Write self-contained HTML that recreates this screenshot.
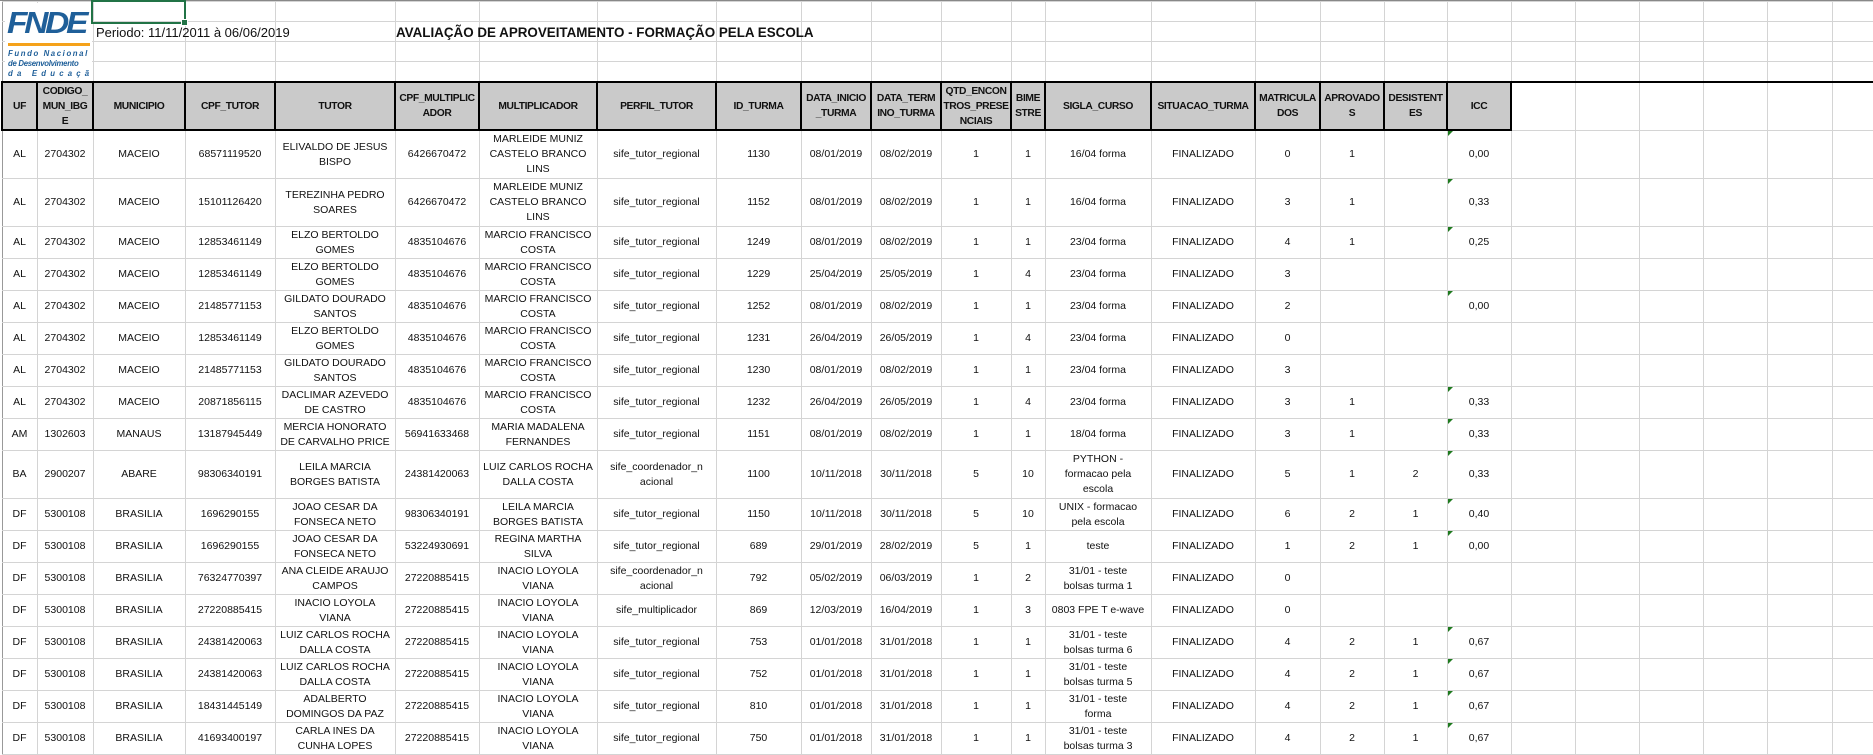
<!DOCTYPE html>
<html><head><meta charset="utf-8">
<style>
html,body{margin:0;padding:0;background:#fff;}
body{width:1873px;height:754px;overflow:hidden;position:relative;font-family:"Liberation Sans",sans-serif;color:#111;}
table{position:absolute;left:1px;top:1px;border-collapse:collapse;table-layout:fixed;width:1894px;}
td{border:1px solid #d4d4d4;padding:0;text-align:center;vertical-align:middle;font-size:10.5px;line-height:15px;white-space:nowrap;overflow:hidden;position:relative;}
tr.t td{height:19px;}
tr.h td{height:46px;background:#cacaca;border:2px solid #000;font-weight:bold;letter-spacing:-0.4px;font-size:10.3px;}
tr.h td.e{background:#fff;border:1px solid #d4d4d4;border-top:2px solid #000;}
tr.r3 td{height:47px;}
tr.r2 td{height:31px;}
td.L{border-left:1px solid #999;}
td.g::before{content:"";position:absolute;left:0;top:0;border-top:5px solid #1e7a1e;border-right:5px solid transparent;}
#topline{position:absolute;left:0;top:0;width:1873px;height:1px;background:#888;}
#logo{position:absolute;left:5px;top:3px;width:87px;height:78px;background:#fff;overflow:hidden;}
#fnde{position:absolute;left:2px;top:5px;font:italic bold 31px/30px "Liberation Sans",sans-serif;color:#1f5f99;letter-spacing:-3px;transform:scaleX(1.08);transform-origin:left;}
#bar{position:absolute;left:3px;top:40px;width:82px;height:3px;background:#f5a21a;}
.lt{position:absolute;left:3px;font:italic bold 7.8px/9px "Liberation Sans",sans-serif;color:#1f5f99;white-space:nowrap;}
#per{position:absolute;left:96px;top:25px;font-size:13px;line-height:16px;color:#111;}
#tit{position:absolute;left:396px;top:25px;font-size:13.4px;font-weight:bold;line-height:16px;color:#111;}
#sel{position:absolute;left:91px;top:0px;width:91px;height:20px;border:2px solid #217346;}
#sel::after{content:"";position:absolute;right:-4px;bottom:-4px;width:5px;height:5px;background:#217346;border:1px solid #fff;}
</style></head><body>
<table>
<colgroup>
<col style="width:35px"><col style="width:56px"><col style="width:92px"><col style="width:90px"><col style="width:120px"><col style="width:84px"><col style="width:118px"><col style="width:119px"><col style="width:85px"><col style="width:70px"><col style="width:70px"><col style="width:70px"><col style="width:34px"><col style="width:106px"><col style="width:104px"><col style="width:65px"><col style="width:64px"><col style="width:63px"><col style="width:64px"><col style="width:64px"><col style="width:64px"><col style="width:64px"><col style="width:64px"><col style="width:65px"><col style="width:64px">
</colgroup>
<tr class="t"><td class="L"></td><td></td><td></td><td></td><td></td><td></td><td></td><td></td><td></td><td></td><td></td><td></td><td></td><td></td><td></td><td></td><td></td><td></td><td></td><td></td><td></td><td></td><td></td><td></td><td></td></tr>
<tr class="t"><td class="L"></td><td></td><td></td><td></td><td></td><td></td><td></td><td></td><td></td><td></td><td></td><td></td><td></td><td></td><td></td><td></td><td></td><td></td><td></td><td></td><td></td><td></td><td></td><td></td><td></td></tr>
<tr class="t"><td class="L"></td><td></td><td></td><td></td><td></td><td></td><td></td><td></td><td></td><td></td><td></td><td></td><td></td><td></td><td></td><td></td><td></td><td></td><td></td><td></td><td></td><td></td><td></td><td></td><td></td></tr>
<tr class="t"><td class="L"></td><td></td><td></td><td></td><td></td><td></td><td></td><td></td><td></td><td></td><td></td><td></td><td></td><td></td><td></td><td></td><td></td><td></td><td></td><td></td><td></td><td></td><td></td><td></td><td></td></tr>
<tr class="h"><td>UF</td><td>CODIGO_<br>MUN_IBG<br>E</td><td>MUNICIPIO</td><td>CPF_TUTOR</td><td>TUTOR</td><td>CPF_MULTIPLIC<br>ADOR</td><td>MULTIPLICADOR</td><td>PERFIL_TUTOR</td><td>ID_TURMA</td><td>DATA_INICIO<br>_TURMA</td><td>DATA_TERM<br>INO_TURMA</td><td>QTD_ENCON<br>TROS_PRESE<br>NCIAIS</td><td>BIME<br>STRE</td><td>SIGLA_CURSO</td><td>SITUACAO_TURMA</td><td>MATRICULA<br>DOS</td><td>APROVADO<br>S</td><td>DESISTENT<br>ES</td><td>ICC</td><td class="e"></td><td class="e"></td><td class="e"></td><td class="e"></td><td class="e"></td><td class="e"></td></tr>
<tr class="r3"><td class="L">AL</td><td>2704302</td><td>MACEIO</td><td>68571119520</td><td>ELIVALDO DE JESUS<br>BISPO</td><td>6426670472</td><td>MARLEIDE MUNIZ<br>CASTELO BRANCO<br>LINS</td><td>sife_tutor_regional</td><td>1130</td><td>08/01/2019</td><td>08/02/2019</td><td>1</td><td>1</td><td>16/04 forma</td><td>FINALIZADO</td><td>0</td><td>1</td><td></td><td class="g">0,00</td><td></td><td></td><td></td><td></td><td></td><td></td></tr>
<tr class="r3"><td class="L">AL</td><td>2704302</td><td>MACEIO</td><td>15101126420</td><td>TEREZINHA PEDRO<br>SOARES</td><td>6426670472</td><td>MARLEIDE MUNIZ<br>CASTELO BRANCO<br>LINS</td><td>sife_tutor_regional</td><td>1152</td><td>08/01/2019</td><td>08/02/2019</td><td>1</td><td>1</td><td>16/04 forma</td><td>FINALIZADO</td><td>3</td><td>1</td><td></td><td class="g">0,33</td><td></td><td></td><td></td><td></td><td></td><td></td></tr>
<tr class="r2"><td class="L">AL</td><td>2704302</td><td>MACEIO</td><td>12853461149</td><td>ELZO BERTOLDO<br>GOMES</td><td>4835104676</td><td>MARCIO FRANCISCO<br>COSTA</td><td>sife_tutor_regional</td><td>1249</td><td>08/01/2019</td><td>08/02/2019</td><td>1</td><td>1</td><td>23/04 forma</td><td>FINALIZADO</td><td>4</td><td>1</td><td></td><td class="g">0,25</td><td></td><td></td><td></td><td></td><td></td><td></td></tr>
<tr class="r2"><td class="L">AL</td><td>2704302</td><td>MACEIO</td><td>12853461149</td><td>ELZO BERTOLDO<br>GOMES</td><td>4835104676</td><td>MARCIO FRANCISCO<br>COSTA</td><td>sife_tutor_regional</td><td>1229</td><td>25/04/2019</td><td>25/05/2019</td><td>1</td><td>4</td><td>23/04 forma</td><td>FINALIZADO</td><td>3</td><td></td><td></td><td></td><td></td><td></td><td></td><td></td><td></td><td></td></tr>
<tr class="r2"><td class="L">AL</td><td>2704302</td><td>MACEIO</td><td>21485771153</td><td>GILDATO DOURADO<br>SANTOS</td><td>4835104676</td><td>MARCIO FRANCISCO<br>COSTA</td><td>sife_tutor_regional</td><td>1252</td><td>08/01/2019</td><td>08/02/2019</td><td>1</td><td>1</td><td>23/04 forma</td><td>FINALIZADO</td><td>2</td><td></td><td></td><td class="g">0,00</td><td></td><td></td><td></td><td></td><td></td><td></td></tr>
<tr class="r2"><td class="L">AL</td><td>2704302</td><td>MACEIO</td><td>12853461149</td><td>ELZO BERTOLDO<br>GOMES</td><td>4835104676</td><td>MARCIO FRANCISCO<br>COSTA</td><td>sife_tutor_regional</td><td>1231</td><td>26/04/2019</td><td>26/05/2019</td><td>1</td><td>4</td><td>23/04 forma</td><td>FINALIZADO</td><td>0</td><td></td><td></td><td></td><td></td><td></td><td></td><td></td><td></td><td></td></tr>
<tr class="r2"><td class="L">AL</td><td>2704302</td><td>MACEIO</td><td>21485771153</td><td>GILDATO DOURADO<br>SANTOS</td><td>4835104676</td><td>MARCIO FRANCISCO<br>COSTA</td><td>sife_tutor_regional</td><td>1230</td><td>08/01/2019</td><td>08/02/2019</td><td>1</td><td>1</td><td>23/04 forma</td><td>FINALIZADO</td><td>3</td><td></td><td></td><td></td><td></td><td></td><td></td><td></td><td></td><td></td></tr>
<tr class="r2"><td class="L">AL</td><td>2704302</td><td>MACEIO</td><td>20871856115</td><td>DACLIMAR AZEVEDO<br>DE CASTRO</td><td>4835104676</td><td>MARCIO FRANCISCO<br>COSTA</td><td>sife_tutor_regional</td><td>1232</td><td>26/04/2019</td><td>26/05/2019</td><td>1</td><td>4</td><td>23/04 forma</td><td>FINALIZADO</td><td>3</td><td>1</td><td></td><td class="g">0,33</td><td></td><td></td><td></td><td></td><td></td><td></td></tr>
<tr class="r2"><td class="L">AM</td><td>1302603</td><td>MANAUS</td><td>13187945449</td><td>MERCIA HONORATO<br>DE CARVALHO PRICE</td><td>56941633468</td><td>MARIA MADALENA<br>FERNANDES</td><td>sife_tutor_regional</td><td>1151</td><td>08/01/2019</td><td>08/02/2019</td><td>1</td><td>1</td><td>18/04 forma</td><td>FINALIZADO</td><td>3</td><td>1</td><td></td><td class="g">0,33</td><td></td><td></td><td></td><td></td><td></td><td></td></tr>
<tr class="r3"><td class="L">BA</td><td>2900207</td><td>ABARE</td><td>98306340191</td><td>LEILA MARCIA<br>BORGES BATISTA</td><td>24381420063</td><td>LUIZ CARLOS ROCHA<br>DALLA COSTA</td><td>sife_coordenador_n<br>acional</td><td>1100</td><td>10/11/2018</td><td>30/11/2018</td><td>5</td><td>10</td><td>PYTHON -<br>formacao pela<br>escola</td><td>FINALIZADO</td><td>5</td><td>1</td><td>2</td><td class="g">0,33</td><td></td><td></td><td></td><td></td><td></td><td></td></tr>
<tr class="r2"><td class="L">DF</td><td>5300108</td><td>BRASILIA</td><td>1696290155</td><td>JOAO CESAR DA<br>FONSECA NETO</td><td>98306340191</td><td>LEILA MARCIA<br>BORGES BATISTA</td><td>sife_tutor_regional</td><td>1150</td><td>10/11/2018</td><td>30/11/2018</td><td>5</td><td>10</td><td>UNIX - formacao<br>pela escola</td><td>FINALIZADO</td><td>6</td><td>2</td><td>1</td><td class="g">0,40</td><td></td><td></td><td></td><td></td><td></td><td></td></tr>
<tr class="r2"><td class="L">DF</td><td>5300108</td><td>BRASILIA</td><td>1696290155</td><td>JOAO CESAR DA<br>FONSECA NETO</td><td>53224930691</td><td>REGINA MARTHA<br>SILVA</td><td>sife_tutor_regional</td><td>689</td><td>29/01/2019</td><td>28/02/2019</td><td>5</td><td>1</td><td>teste</td><td>FINALIZADO</td><td>1</td><td>2</td><td>1</td><td class="g">0,00</td><td></td><td></td><td></td><td></td><td></td><td></td></tr>
<tr class="r2"><td class="L">DF</td><td>5300108</td><td>BRASILIA</td><td>76324770397</td><td>ANA CLEIDE ARAUJO<br>CAMPOS</td><td>27220885415</td><td>INACIO LOYOLA<br>VIANA</td><td>sife_coordenador_n<br>acional</td><td>792</td><td>05/02/2019</td><td>06/03/2019</td><td>1</td><td>2</td><td>31/01 - teste<br>bolsas turma 1</td><td>FINALIZADO</td><td>0</td><td></td><td></td><td></td><td></td><td></td><td></td><td></td><td></td><td></td></tr>
<tr class="r2"><td class="L">DF</td><td>5300108</td><td>BRASILIA</td><td>27220885415</td><td>INACIO LOYOLA<br>VIANA</td><td>27220885415</td><td>INACIO LOYOLA<br>VIANA</td><td>sife_multiplicador</td><td>869</td><td>12/03/2019</td><td>16/04/2019</td><td>1</td><td>3</td><td>0803 FPE T e-wave</td><td>FINALIZADO</td><td>0</td><td></td><td></td><td></td><td></td><td></td><td></td><td></td><td></td><td></td></tr>
<tr class="r2"><td class="L">DF</td><td>5300108</td><td>BRASILIA</td><td>24381420063</td><td>LUIZ CARLOS ROCHA<br>DALLA COSTA</td><td>27220885415</td><td>INACIO LOYOLA<br>VIANA</td><td>sife_tutor_regional</td><td>753</td><td>01/01/2018</td><td>31/01/2018</td><td>1</td><td>1</td><td>31/01 - teste<br>bolsas turma 6</td><td>FINALIZADO</td><td>4</td><td>2</td><td>1</td><td class="g">0,67</td><td></td><td></td><td></td><td></td><td></td><td></td></tr>
<tr class="r2"><td class="L">DF</td><td>5300108</td><td>BRASILIA</td><td>24381420063</td><td>LUIZ CARLOS ROCHA<br>DALLA COSTA</td><td>27220885415</td><td>INACIO LOYOLA<br>VIANA</td><td>sife_tutor_regional</td><td>752</td><td>01/01/2018</td><td>31/01/2018</td><td>1</td><td>1</td><td>31/01 - teste<br>bolsas turma 5</td><td>FINALIZADO</td><td>4</td><td>2</td><td>1</td><td class="g">0,67</td><td></td><td></td><td></td><td></td><td></td><td></td></tr>
<tr class="r2"><td class="L">DF</td><td>5300108</td><td>BRASILIA</td><td>18431445149</td><td>ADALBERTO<br>DOMINGOS DA PAZ</td><td>27220885415</td><td>INACIO LOYOLA<br>VIANA</td><td>sife_tutor_regional</td><td>810</td><td>01/01/2018</td><td>31/01/2018</td><td>1</td><td>1</td><td>31/01 - teste<br>forma</td><td>FINALIZADO</td><td>4</td><td>2</td><td>1</td><td class="g">0,67</td><td></td><td></td><td></td><td></td><td></td><td></td></tr>
<tr class="r2"><td class="L">DF</td><td>5300108</td><td>BRASILIA</td><td>41693400197</td><td>CARLA INES DA<br>CUNHA LOPES</td><td>27220885415</td><td>INACIO LOYOLA<br>VIANA</td><td>sife_tutor_regional</td><td>750</td><td>01/01/2018</td><td>31/01/2018</td><td>1</td><td>1</td><td>31/01 - teste<br>bolsas turma 3</td><td>FINALIZADO</td><td>4</td><td>2</td><td>1</td><td class="g">0,67</td><td></td><td></td><td></td><td></td><td></td><td></td></tr>
</table>
<div id="topline"></div>
<div id="logo">
  <div id="fnde">FNDE</div>
  <div id="bar"></div>
  <div class="lt" style="top:46px;letter-spacing:1.6px">Fundo Nacional</div>
  <div class="lt" style="top:56px;letter-spacing:-0.3px">de Desenvolvimento</div>
  <div class="lt" style="top:66px;letter-spacing:4.2px">da Educação</div>
</div>
<div id="per">Periodo: 11/11/2011 à 06/06/2019</div>
<div id="tit">AVALIAÇÃO DE APROVEITAMENTO - FORMAÇÃO PELA ESCOLA</div>
<div id="sel"></div>
</body></html>
